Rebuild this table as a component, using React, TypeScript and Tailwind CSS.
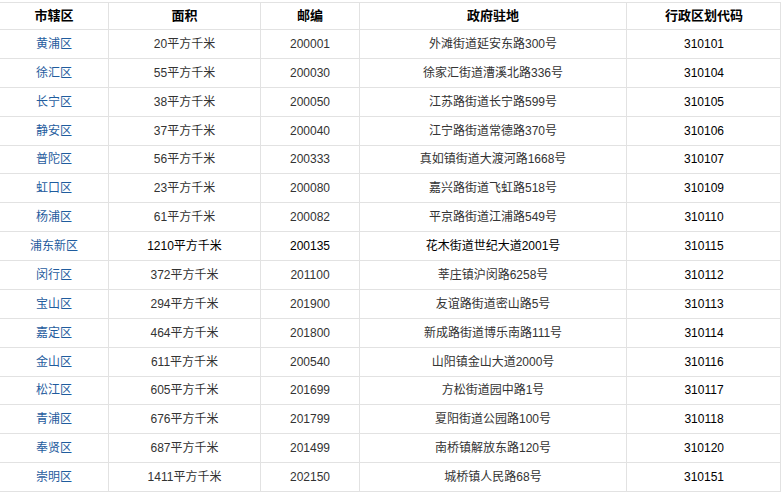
const rows: [string, string, string, string, string, boolean?][] = [
  ["黄浦区", "20平方千米", "200001", "外滩街道延安东路300号", "310101"],
  ["徐汇区", "55平方千米", "200030", "徐家汇街道漕溪北路336号", "310104"],
  ["长宁区", "38平方千米", "200050", "江苏路街道长宁路599号", "310105"],
  ["静安区", "37平方千米", "200040", "江宁路街道常德路370号", "310106"],
  ["普陀区", "56平方千米", "200333", "真如镇街道大渡河路1668号", "310107"],
  ["虹口区", "23平方千米", "200080", "嘉兴路街道飞虹路518号", "310109"],
  ["杨浦区", "61平方千米", "200082", "平京路街道江浦路549号", "310110"],
  ["浦东新区", "1210平方千米", "200135", "花木街道世纪大道2001号", "310115", true],
  ["闵行区", "372平方千米", "201100", "莘庄镇沪闵路6258号", "310112"],
  ["宝山区", "294平方千米", "201900", "友谊路街道密山路5号", "310113"],
  ["嘉定区", "464平方千米", "201800", "新成路街道博乐南路111号", "310114"],
  ["金山区", "611平方千米", "200540", "山阳镇金山大道2000号", "310116"],
  ["松江区", "605平方千米", "201699", "方松街道园中路1号", "310117"],
  ["青浦区", "676平方千米", "201799", "夏阳街道公园路100号", "310118"],
  ["奉贤区", "687平方千米", "201499", "南桥镇解放东路120号", "310120"],
  ["崇明区", "1411平方千米", "202150", "城桥镇人民路68号", "310151"],
];

const headers = ["市辖区", "面积", "邮编", "政府驻地", "行政区划代码"];
const widths = ["w-[109px]", "w-[152px]", "w-[99px]", "w-[267px]", "w-[154px]"];

export default function App() {
  return (
    <div
      className="bg-white w-[782px] h-[495px] pt-[2px]"
      style={{ fontFamily: '"Liberation Sans", Arial, "Noto Sans CJK SC", sans-serif' }}
    >
      <div className="w-[781px] border-t border-r border-[#e2e2e2]">
        <div className="flex h-[27px]">
          {headers.map((h, i) => (
            <div
              key={h}
              className={`${widths[i]} shrink-0 flex items-center justify-center border-b border-[#e2e2e2] text-[13px] font-bold text-black ${i < 4 ? "border-r" : ""}`}
            >
              {h}
            </div>
          ))}
        </div>
        {rows.map((r) => {
          const dark = r[5] === true;
          const body = dark ? "text-black" : "text-[#333]";
          return (
            <div key={r[0]} className="flex h-[28.875px]">
              <div className={`${widths[0]} shrink-0 flex items-center justify-center border-b border-r border-[#e2e2e2] text-[12px] text-[#1f5c9e]`}>
                {r[0]}
              </div>
              <div className={`${widths[1]} shrink-0 flex items-center justify-center border-b border-r border-[#e2e2e2] text-[12px] ${body}`}>
                {r[1]}
              </div>
              <div className={`${widths[2]} shrink-0 flex items-center justify-center border-b border-r border-[#e2e2e2] text-[12px] ${body}`}>
                {r[2]}
              </div>
              <div className={`${widths[3]} shrink-0 flex items-center justify-center border-b border-r border-[#e2e2e2] text-[12px] ${body}`}>
                {r[3]}
              </div>
              <div className={`${widths[4]} shrink-0 flex items-center justify-center border-b border-[#e2e2e2] text-[12px] text-black`}>
                {r[4]}
              </div>
            </div>
          );
        })}
      </div>
    </div>
  );
}
